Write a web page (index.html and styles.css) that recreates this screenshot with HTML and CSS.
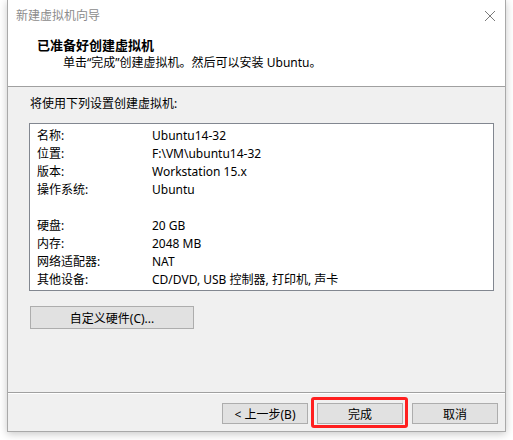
FILE: index.html
```html
<!DOCTYPE html>
<html lang="zh-CN">
<head>
<meta charset="utf-8">
<title>新建虚拟机向导</title>
<link rel="stylesheet" href="styles.css">
</head>
<body>
<div class="window">
  <div class="titlebar">
    <span class="title">新建虚拟机向导</span>
    <svg class="close" width="12" height="12" viewBox="0 0 12 12"><path d="M1 1 L11 11 M11 1 L1 11" stroke="#7a7a7a" stroke-width="1"/></svg>
  </div>
  <div class="header">
    <div class="heading">已准备好创建虚拟机</div>
    <div class="sub">单击“完成”创建虚拟机。然后可以安装 Ubuntu。</div>
  </div>
  <div class="content">
    <div class="intro">将使用下列设置创建虚拟机:</div>
    <div class="box">
      <div class="grid">
        <span>名称:</span><span>Ubuntu14-32</span>
        <span>位置:</span><span>F:\VM\ubuntu14-32</span>
        <span>版本:</span><span>Workstation 15.x</span>
        <span>操作系统:</span><span>Ubuntu</span>
        <span class="blank"></span><span class="blank"></span>
        <span>硬盘:</span><span>20 GB</span>
        <span>内存:</span><span>2048 MB</span>
        <span>网络适配器:</span><span>NAT</span>
        <span>其他设备:</span><span>CD/DVD, USB 控制器, 打印机, 声卡</span>
      </div>
    </div>
    <button class="btn custom">自定义硬件(C)...</button>
  </div>
  <div class="footer">
    <button class="btn nav">&lt; 上一步(B)</button>
    <span class="highlight-wrap"><button class="btn nav">完成</button><span class="highlight"></span></span>
    <button class="btn nav">取消</button>
  </div>
</div>
</body>
</html>
```

FILE: styles.css
```css
html, body {
  margin: 0;
  padding: 0;
}
body {
  width: 513px;
  height: 440px;
  overflow: hidden;
  background: #ffffff;
  font-family: "Noto Sans", "Noto Sans CJK SC", sans-serif;
  font-size: 12px;
  color: #000;
}
.window {
  box-sizing: border-box;
  margin-left: 7px;
  width: 499px;
  height: 432px;
  border: 1px solid #a9a9a9;
  border-top: none;
  background: #f0f0f0;
  display: flex;
  flex-direction: column;
  box-shadow: 0 2px 8px rgba(0, 0, 0, 0.22);
}
.titlebar {
  height: 31px;
  background: #fff;
  display: flex;
  align-items: center;
  justify-content: space-between;
  padding: 0 8px 0 8px;
}
.title {
  color: #8c8c8c;
  line-height: 18px;
}
.close {
  margin-right: 1px;
}
.header {
  background: #fff;
  height: 56px;
  box-sizing: border-box;
  padding-top: 6px;
  border-bottom: 1px solid #a0a0a0;
}
.heading {
  font-weight: bold;
  font-size: 13px;
  line-height: 17px;
  padding-left: 29px;
}
.sub {
  line-height: 17px;
  padding-left: 55px;
}
.content {
  flex: 1;
  padding: 8px 11px 0 21px;
}
.intro {
  line-height: 18px;
  padding-left: 1px;
}
.box {
  margin-top: 10px;
  height: 168px;
  box-sizing: border-box;
  border: 1px solid #828790;
  background: #fff;
  padding: 3px 7px 0 7px;
}
.grid {
  display: grid;
  grid-template-columns: 115px 1fr;
  grid-auto-rows: 18px;
  line-height: 18px;
}
.btn {
  font-family: "Noto Sans", "Noto Sans CJK SC", sans-serif;
  font-size: 12px;
  color: #000;
  background: #e1e1e1;
  border: 1px solid #adadad;
  border-radius: 0;
  padding: 0;
  margin: 0;
  box-sizing: border-box;
}
.custom {
  margin-top: 15px;
  margin-left: 1px;
  width: 164px;
  height: 23px;
}
.footer {
  border-top: 1px solid #a0a0a0;
  box-shadow: inset 0 1px 0 #ffffff;
  height: 39px;
  box-sizing: border-box;
  display: flex;
  justify-content: flex-end;
  align-items: flex-start;
  gap: 9px;
  padding: 10px 7px 0 0;
}
.nav {
  width: 86px;
  height: 21px;
  display: block;
}
.highlight-wrap {
  position: relative;
  display: block;
}
.highlight {
  position: absolute;
  left: -6px;
  top: -6px;
  right: -5px;
  bottom: -4px;
  border: 3px solid #ff1f1f;
  border-radius: 3px;
  pointer-events: none;
}
```
